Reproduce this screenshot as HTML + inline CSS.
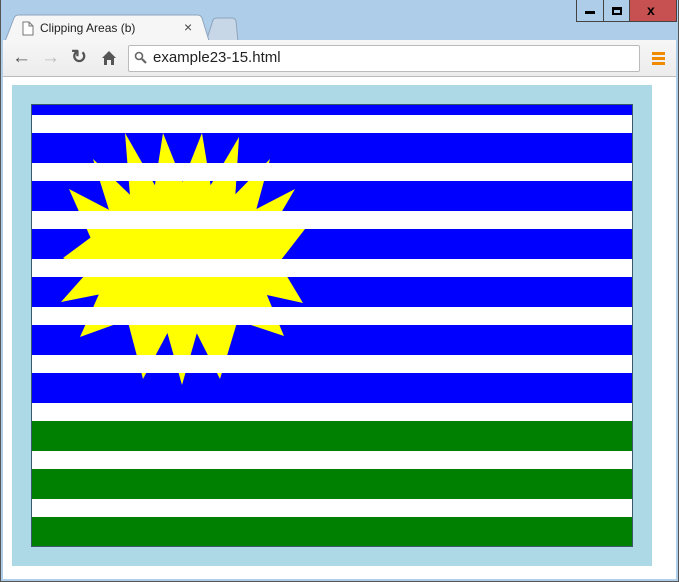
<!DOCTYPE html>
<html><head><style>
*{margin:0;padding:0;box-sizing:border-box}
body{width:679px;height:582px;background:#aecde9;position:relative;overflow:hidden;font-family:"Liberation Sans",sans-serif}
.abs{position:absolute}
</style></head><body>
<div class="abs" style="left:0;top:0;width:679px;height:582px;border:1px solid #555;border-top:none;"></div>
<!-- window buttons -->
<div class="abs" style="left:576px;top:0;width:101px;height:22px;border:1px solid #444;border-top:none;background:#aecde9"></div>
<div class="abs" style="left:603px;top:0;width:1px;height:22px;background:#444"></div>
<div class="abs" style="left:629px;top:0;width:48px;height:22px;background:#c75050;border:1px solid #444;border-top:none"></div>
<div class="abs" style="left:585px;top:11px;width:10px;height:3px;background:#000"></div>
<div class="abs" style="left:612px;top:7px;width:10px;height:8px;border:2px solid #000;border-top-width:3px"></div>
<div class="abs" style="left:647px;top:2px;font-size:14px;font-weight:bold;color:#000">x</div>
<!-- tabs -->
<svg class="abs" style="left:0;top:14px" width="240" height="30">
<path d="M206 28 L213 6 Q214 4 217 4 L232 4 Q235 4 236 7 L238 28 Z" fill="#c7d7e8" stroke="#8ea4bd"/>
<path d="M4 30 L14 4 Q15 1 19 1 L197 1 Q201 1 202 4 L210 30 Z" fill="#f6f6f6" stroke="#8ea4bd"/>
</svg>
<svg class="abs" style="left:22px;top:21px" width="12" height="15"><path d="M1 1 H7 L11 5 V14 H1 Z M7 1 V5 H11" fill="#fff" stroke="#777"/></svg>
<div class="abs" style="left:40px;top:21px;font-size:12px;color:#222">Clipping Areas (b)</div>
<div class="abs" style="left:184px;top:19px;font-size:14px;color:#444">×</div>
<!-- toolbar -->
<div class="abs" style="left:3px;top:40px;width:673px;height:37px;background:linear-gradient(#f6f6f6,#ececec);border-bottom:1px solid #bbb"></div>
<div class="abs" style="left:12px;top:47px;font-size:19px;color:#555;font-weight:bold">←</div>
<div class="abs" style="left:41px;top:47px;font-size:19px;color:#bbb;font-weight:bold">→</div>
<div class="abs" style="left:71px;top:46px;font-size:19px;color:#555;font-weight:bold">↻</div>
<svg class="abs" style="left:101px;top:50px" width="16" height="16"><path d="M1 8 L8 1 L15 8 H13 V15 H10 V10 H6 V15 H3 V8 Z" fill="#555"/></svg>
<div class="abs" style="left:128px;top:45px;width:512px;height:27px;background:#fff;border:1px solid #bbb;border-radius:2px"></div>
<svg class="abs" style="left:134px;top:51px" width="14" height="14"><circle cx="5" cy="5" r="3.5" fill="none" stroke="#666" stroke-width="1.6"/><path d="M8 8 L12 12" stroke="#666" stroke-width="2.2"/></svg>
<div class="abs" style="left:153px;top:49px;font-size:15px;color:#222">example23-15.html</div>
<div class="abs" style="left:652px;top:52px;width:13px;height:3px;background:#f08a00"></div>
<div class="abs" style="left:652px;top:57px;width:13px;height:3px;background:#f08a00"></div>
<div class="abs" style="left:652px;top:62px;width:13px;height:3px;background:#f08a00"></div>
<!-- page -->
<div class="abs" style="left:3px;top:77px;width:673px;height:502px;background:#fff"></div>
<div class="abs" style="left:12px;top:85px;width:640px;height:481px;background:#add8e6"></div>
<svg class="abs" style="left:31px;top:104px" width="602" height="443" id="c">
<rect x="0" y="0" width="602" height="299" fill="#00f"/>
<rect x="0" y="299" width="602" height="144" fill="#008000"/>
<polygon id="sun" fill="#ff0" points=""/>
<g fill="#fff" id="w"></g>
<rect x="0.5" y="0.5" width="601" height="442" fill="none" stroke="#3a5a6a"/>
</svg>
<script>
var t=[[125,133],[163,133],[202,133],[239,137],[270,159],[295,189],[305,229],[303,303],[284,336],[220,379],[182,385],[143,379],[80,337],[61,302],[63,258],[69,189],[93,159]];
var cx=183,cy=258,pts=[];
var ang=t.map(function(p){return Math.atan2(p[1]-cy,p[0]-cx)});
for(var i=0;i<t.length;i++){pts.push((t[i][0]-31)+','+(t[i][1]-104));
var a1=ang[i],a2=ang[(i+1)%t.length];if(a2<a1)a2+=2*Math.PI;var m=(a1+a2)/2;
pts.push((cx+96*Math.cos(m)-31).toFixed(1)+','+(cy+76*Math.sin(m)-104).toFixed(1));}
document.getElementById('sun').setAttribute('points',pts.join(' '));
var g=document.getElementById('w'),s='';
for(var y=11;y<443;y+=48)s+='<rect x="0" y="'+y+'" width="602" height="18"/>';
g.innerHTML=s;
</script>
</body></html>
